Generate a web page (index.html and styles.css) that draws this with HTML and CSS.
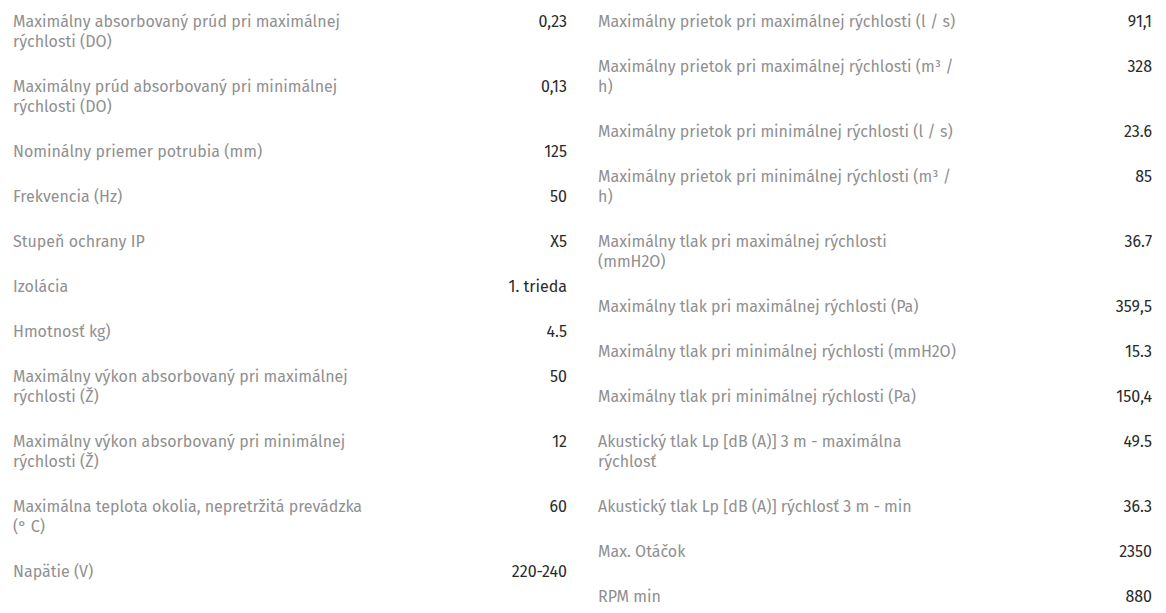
FILE: index.html
```html
<!DOCTYPE html>
<html lang="sk">
<head>
<meta charset="utf-8">
<title>Technické parametre</title>
<link rel="stylesheet" href="styles.css">
</head>
<body>
<div class="specs">
  <div class="col">
    <div class="row"><div class="label">Maximálny absorbovaný prúd pri maximálnej rýchlosti (DO)</div><div class="value">0,23</div></div>
    <div class="row"><div class="label">Maximálny prúd absorbovaný pri minimálnej rýchlosti (DO)</div><div class="value">0,13</div></div>
    <div class="row"><div class="label">Nominálny priemer potrubia (mm)</div><div class="value">125</div></div>
    <div class="row"><div class="label">Frekvencia (Hz)</div><div class="value">50</div></div>
    <div class="row"><div class="label">Stupeň ochrany IP</div><div class="value">X5</div></div>
    <div class="row"><div class="label">Izolácia</div><div class="value">1. trieda</div></div>
    <div class="row"><div class="label">Hmotnosť kg)</div><div class="value">4.5</div></div>
    <div class="row"><div class="label">Maximálny výkon absorbovaný pri maximálnej rýchlosti (Ž)</div><div class="value">50</div></div>
    <div class="row"><div class="label">Maximálny výkon absorbovaný pri minimálnej rýchlosti (Ž)</div><div class="value">12</div></div>
    <div class="row"><div class="label">Maximálna teplota okolia, nepretržitá prevádzka (° C)</div><div class="value">60</div></div>
    <div class="row"><div class="label">Napätie (V)</div><div class="value">220-240</div></div>
  </div>
  <div class="col">
    <div class="row"><div class="label">Maximálny prietok pri maximálnej rýchlosti (l / s)</div><div class="value">91,1</div></div>
    <div class="row"><div class="label">Maximálny prietok pri maximálnej rýchlosti (m³ / h)</div><div class="value">328</div></div>
    <div class="row"><div class="label">Maximálny prietok pri minimálnej rýchlosti (l / s)</div><div class="value">23.6</div></div>
    <div class="row"><div class="label">Maximálny prietok pri minimálnej rýchlosti (m³ / h)</div><div class="value">85</div></div>
    <div class="row"><div class="label">Maximálny tlak pri maximálnej rýchlosti (mmH2O)</div><div class="value">36.7</div></div>
    <div class="row"><div class="label">Maximálny tlak pri maximálnej rýchlosti (Pa)</div><div class="value">359,5</div></div>
    <div class="row"><div class="label">Maximálny tlak pri minimálnej rýchlosti (mmH2O)</div><div class="value">15.3</div></div>
    <div class="row"><div class="label">Maximálny tlak pri minimálnej rýchlosti (Pa)</div><div class="value">150,4</div></div>
    <div class="row"><div class="label">Akustický tlak Lp [dB (A)] 3 m - maximálna rýchlosť</div><div class="value">49.5</div></div>
    <div class="row"><div class="label">Akustický tlak Lp [dB (A)] rýchlosť 3 m - min</div><div class="value">36.3</div></div>
    <div class="row"><div class="label">Max. Otáčok</div><div class="value">2350</div></div>
    <div class="row"><div class="label">RPM min</div><div class="value">880</div></div>
  </div>
</div>
</body>
</html>
```
FILE: styles.css
```css
html, body {
  margin: 0;
  padding: 0;
  background: #ffffff;
}
body {
  font-family: "Fira Sans", "Open Sans", "Noto Sans", sans-serif;
  font-size: 16px;
  font-weight: 400;
  line-height: 20px;
}
.specs {
  display: grid;
  grid-template-columns: 554px 554px;
  column-gap: 31px;
  padding: 0 14px 0 13px;
}
.row {
  display: flex;
  align-items: flex-start;
  justify-content: space-between;
  padding: 12px 0 13px;
}
.label {
  width: 359px;
  color: #909090;
}
.value {
  color: #2a2a2a;
  text-align: right;
}
```
